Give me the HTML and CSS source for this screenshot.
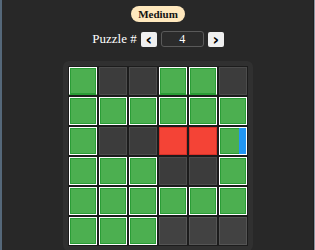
FILE: index.html
```html
<!DOCTYPE html>
<html lang="en">
<head>
    <meta charset="UTF-8">
    <meta name="viewport" content="width=device-width, initial-scale=1.0">
    <title>Puzzle</title>
    <link rel="stylesheet" href="styles.css">
</head>
<body>
    <div class="frame">
        <div class="level">Medium</div>

        <!-- puzzle picker -->
        <div class="picker">
            <span class="picker-label">Puzzle #</span>
            <button class="nav">&lsaquo;</button>
            <div class="num">4</div>
            <button class="nav">&rsaquo;</button>
        </div>

        <div class="board">
            <div class="grid">
                <div class="cell on nb"></div>
                <div class="cell"></div>
                <div class="cell"></div>
                <div class="cell on nb"></div>
                <div class="cell on nb"></div>
                <div class="cell"></div>

                <div class="cell on"></div>
                <div class="cell on"></div>
                <div class="cell on"></div>
                <div class="cell on"></div>
                <div class="cell on"></div>
                <div class="cell on"></div>

                <div class="cell on"></div>
                <div class="cell"></div>
                <div class="cell"></div>
                <div class="cell red"></div>
                <div class="cell red"></div>
                <div class="cell on split"><span class="blue"></span></div>

                <div class="cell on"></div>
                <div class="cell on"></div>
                <div class="cell on"></div>
                <div class="cell"></div>
                <div class="cell"></div>
                <div class="cell on"></div>

                <div class="cell on"></div>
                <div class="cell on"></div>
                <div class="cell on"></div>
                <div class="cell on"></div>
                <div class="cell on"></div>
                <div class="cell on"></div>

                <div class="cell on"></div>
                <div class="cell on"></div>
                <div class="cell on"></div>
                <div class="cell light"></div>
                <div class="cell light"></div>
                <div class="cell light"></div>
            </div>
        </div>
    </div>
</body>
</html>
```

FILE: styles.css
```css
body {
    margin: 0;
    background-color: #282828;
    font-family: "Liberation Serif", serif;
    height: 250px;
    overflow: hidden;
}
.frame {
    height: 250px;
    border-left: 2px solid #55687a;
    border-right: 1px solid #8a94a0;
    box-shadow: inset -1px 0 #1e1e1e;
    display: flex;
    flex-direction: column;
    align-items: center;
    box-sizing: border-box;
    padding-top: 6px;
}
.level {
    background: #ffe8bd;
    color: #111;
    font-weight: bold;
    font-size: 11px;
    line-height: 16px;
    padding: 0 7px;
    border-radius: 9px;
}
.picker {
    display: flex;
    align-items: center;
    gap: 4px;
    margin-top: 9px;
    height: 16px;
}
.picker-label {
    color: #fff;
    font-size: 13px;
}
.nav {
    width: 16px;
    height: 15px;
    padding: 0;
    border: none;
    border-radius: 2px;
    background: #efefef;
    color: #000;
    font-family: "DejaVu Sans", sans-serif;
    font-size: 16px;
    line-height: 13px;
    font-weight: bold;
}
.num {
    width: 41px;
    height: 14px;
    border: 1px solid #5a5a5a;
    border-radius: 3px;
    background: #2b2b2b;
    color: #fff;
    font-size: 12px;
    line-height: 14px;
    text-align: center;
}
.board {
    margin-top: 14px;
    background: #303030;
    border-radius: 6px;
    padding: 5px;
}
.grid {
    display: grid;
    grid-template-columns: repeat(6, 28px);
    grid-auto-rows: 28px;
    gap: 2px;
    padding: 1px;
    background: #1c1c1c;
}
.cell {
    box-sizing: border-box;
    background: #3c3c3c;
    border: 1px solid #4c4c4c;
}
.cell.light {
    background: #424242;
    border-color: #555;
}
.cell.on {
    background: #4caf50;
    border: 1px solid #fff;
    box-shadow: inset 0 0 0 1px #2a9d36;
}
.cell.nb {
    border-bottom-color: #2a9d36;
}
.cell.red {
    background: #f44336;
    border: 1px solid #d8322a;
}
.cell.split {
    display: flex;
    justify-content: flex-end;
}
.blue {
    width: 7px;
    background: #2196f3;
}
```
